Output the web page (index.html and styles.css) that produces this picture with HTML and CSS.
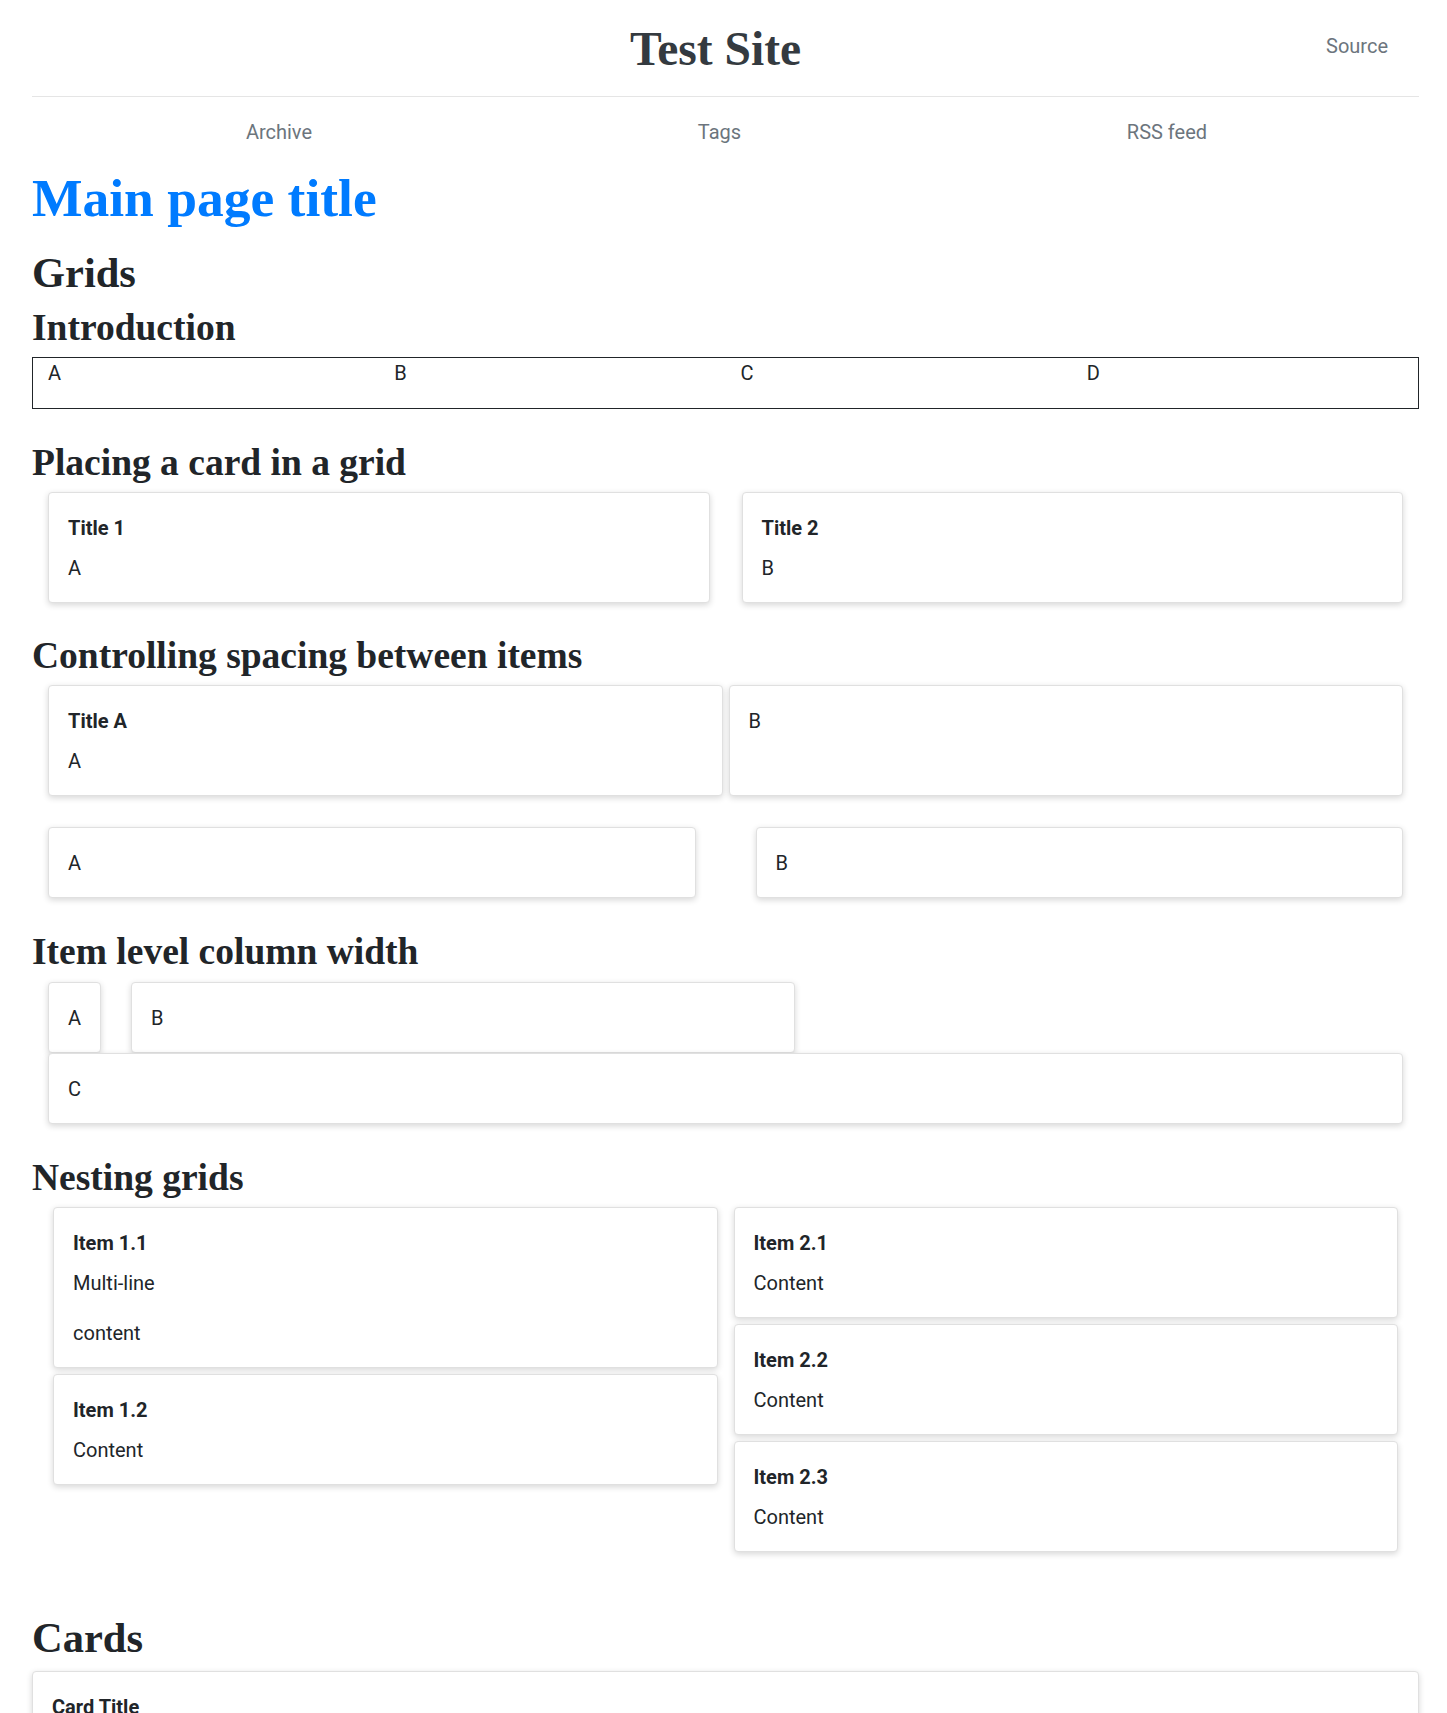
FILE: index.html
```html
<!DOCTYPE html>
<html lang="en">
<head>
<meta charset="utf-8">
<title>Test Site</title>
<link rel="stylesheet" href="styles.css">
</head>
<body>
<div class="page">
  <header class="site-header">
    <div class="header-side"></div>
    <div class="logo"><a href="#">Test Site</a></div>
    <div class="header-source"><a class="muted-link" href="#">Source</a></div>
  </header>

  <nav class="site-nav">
    <a class="muted-link" href="#">Archive</a>
    <a class="muted-link" href="#">Tags</a>
    <a class="muted-link" href="#">RSS feed</a>
  </nav>

  <main class="content">
    <h1 class="page-title">Main page title</h1>
    <h2 class="h2 h-grids">Grids</h2>

    <h3 class="h3 h-intro">Introduction</h3>
    <div class="intro-grid">
      <div class="intro-cell"><p>A</p></div>
      <div class="intro-cell"><p>B</p></div>
      <div class="intro-cell"><p>C</p></div>
      <div class="intro-cell"><p>D</p></div>
    </div>

    <h3 class="h3 h-placing">Placing a card in a grid</h3>
    <div class="grid-two gap-wide">
      <div class="card"><h4 class="card-title">Title 1</h4><p>A</p></div>
      <div class="card"><h4 class="card-title">Title 2</h4><p>B</p></div>
    </div>

    <h3 class="h3 h-spacing">Controlling spacing between items</h3>
    <div class="grid-two gap-tight">
      <div class="card"><h4 class="card-title">Title A</h4><p>A</p></div>
      <div class="card"><p>B</p></div>
    </div>
    <div class="grid-two gap-loose">
      <div class="card"><p>A</p></div>
      <div class="card"><p>B</p></div>
    </div>

    <h3 class="h3 h-item">Item level column width</h3>
    <div class="item-row">
      <div class="card item-auto"><p>A</p></div>
      <div class="card item-half"><p>B</p></div>
      <div class="card item-full"><p>C</p></div>
    </div>

    <h3 class="h3 h-nesting">Nesting grids</h3>
    <div class="nest-outer">
      <div class="nest-inner">
        <div class="card"><h4 class="card-title">Item 1.1</h4><p>Multi-line</p><p>content</p></div>
        <div class="card"><h4 class="card-title">Item 1.2</h4><p>Content</p></div>
      </div>
      <div class="nest-inner">
        <div class="card"><h4 class="card-title">Item 2.1</h4><p>Content</p></div>
        <div class="card"><h4 class="card-title">Item 2.2</h4><p>Content</p></div>
        <div class="card"><h4 class="card-title">Item 2.3</h4><p>Content</p></div>
      </div>
    </div>

    <h2 class="h2 h-cards">Cards</h2>
    <div class="card card-wide">
      <h4 class="card-title">Card Title</h4>
      <p>Card content</p>
    </div>
  </main>
</div>
</body>
</html>
```

FILE: styles.css
```css
* {
  box-sizing: border-box;
}

html,
body {
  margin: 0;
  padding: 0;
}

body {
  font-family: Roboto, "Noto Sans", "Liberation Sans", sans-serif;
  font-size: 20px;
  line-height: 30px;
  color: #212529;
  background: #ffffff;
}

p {
  margin: 0;
}

.page {
  padding: 0 28px 0 32px;
}

/* ---------- header ---------- */
.site-header {
  display: grid;
  grid-template-columns: 1fr 1fr 1fr;
  align-items: start;
  height: 97px;
  padding-top: 25px;
  border-bottom: 1px solid #e5e5e5;
}

.logo {
  text-align: center;
  padding-right: 20px;
  font-family: "Liberation Serif", "Times New Roman", serif;
  font-weight: 700;
  font-size: 47.5px;
  line-height: 48px;
}

.logo a {
  color: #343a40;
  text-decoration: none;
}

.header-source {
  text-align: right;
  padding: 6px 31px 0 0;
}

.muted-link {
  color: #6c757d;
  text-decoration: none;
}

/* ---------- nav ---------- */
.site-nav {
  display: flex;
  justify-content: space-around;
  padding: 20px 19px 0 21px;
  line-height: 30px;
}

/* ---------- headings ---------- */
.page-title,
.h2,
.h3 {
  font-family: "Liberation Serif", "Times New Roman", serif;
  font-weight: 700;
  color: #212529;
  margin: 0;
}

.page-title {
  font-size: 53.5px;
  line-height: 60px;
  color: #007bff;
  margin: 21px 0 21px;
}

.h2 {
  font-size: 42.5px;
  line-height: 48px;
}

.h3 {
  font-size: 37.5px;
  line-height: 42px;
}

.h-grids { margin-bottom: 10px; }
.h-intro { margin-bottom: 8px; }
.h-placing { margin: 33px 0 8px; }
.h-spacing { margin: 32px 0 8px; }
.h-item { margin: 33px 0 9px; }
.h-nesting { margin: 33px 0 8px; }
.h-cards { margin: 62px 0 9px; }

/* ---------- intro grid ---------- */
.intro-grid {
  display: grid;
  grid-template-columns: repeat(4, 1fr);
  border: 1px solid #212529;
}

.intro-cell {
  padding: 0 15px;
}

.intro-cell p {
  margin-bottom: 20px;
}

/* ---------- cards ---------- */
.card {
  background: #ffffff;
  border: 1px solid #e0e0e0;
  border-radius: 4px;
  padding: 20px 19px 19px;
  box-shadow: 0 2px 6px rgba(0, 0, 0, 0.16);
}

.card-title {
  margin: 0 0 10px;
  font-size: 20px;
  line-height: 30px;
  font-weight: 700;
}

.card p + p {
  margin-top: 20px;
}

/* ---------- grids ---------- */
.grid-two {
  display: grid;
  grid-template-columns: 1fr 1fr;
  padding: 0 16px;
}

.gap-wide { column-gap: 32px; }
.gap-tight { column-gap: 6px; }
.gap-loose { column-gap: 60px; margin-top: 31px; }

.item-row {
  display: flex;
  flex-wrap: wrap;
  column-gap: 30px;
  padding: 0 16px;
}

.item-auto { flex: 0 0 auto; }
.item-half { flex: 0 0 calc(50% - 14px); }
.item-full { flex: 0 0 100%; }

.nest-outer {
  display: grid;
  grid-template-columns: 1fr 1fr;
  column-gap: 6px;
  align-items: start;
  padding: 0 16px;
}

.nest-inner {
  display: grid;
  row-gap: 6px;
  padding: 0 5px;
}

.card-wide {
  margin-bottom: 40px;
}
```
